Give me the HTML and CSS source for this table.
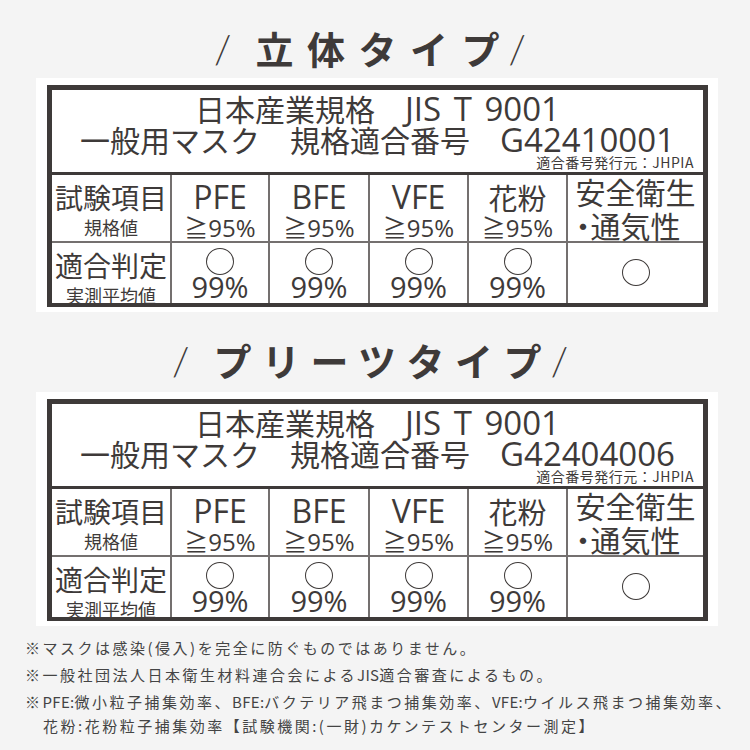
FILE: index.html
```html
<!DOCTYPE html>
<html lang="ja">
<head>
<meta charset="utf-8">
<title>マスク規格</title>
<link rel="stylesheet" href="styles.css">
</head>
<body>
<main class="page">
  <h2 class="title"><span class="slash slash--left">/</span><span class="title-text">立体タイプ</span><span class="slash slash--right">/</span></h2>
  <section class="panel">
    <div class="spec">
      <div class="spec-head">
        <p class="head-line">日本産業規格　<span class="latin">JIS T 9001</span></p>
        <p class="head-line">一般用マスク　規格適合番号　<span class="latin">G42410001</span></p>
        <p class="issuer">適合番号発行元：JHPIA</p>
      </div>
      <div class="spec-grid">
        <div class="cell label"><span class="label-main">試験項目</span><span class="label-sub">規格値</span></div>
        <div class="cell"><span class="item">PFE</span><span class="std">≧95%</span></div>
        <div class="cell"><span class="item">BFE</span><span class="std">≧95%</span></div>
        <div class="cell"><span class="item">VFE</span><span class="std">≧95%</span></div>
        <div class="cell"><span class="item item--jp">花粉</span><span class="std">≧95%</span></div>
        <div class="cell safety"><span class="safety-text">安全衛生<br>・通気性</span></div>
        <div class="cell label"><span class="label-main">適合判定</span><span class="label-sub">実測平均値</span></div>
        <div class="cell"><span class="ok"></span><span class="value">99%</span></div>
        <div class="cell"><span class="ok"></span><span class="value">99%</span></div>
        <div class="cell"><span class="ok"></span><span class="value">99%</span></div>
        <div class="cell"><span class="ok"></span><span class="value">99%</span></div>
        <div class="cell cell--center"><span class="ok"></span></div>
      </div>
    </div>
  </section>

  <h2 class="title title--second"><span class="slash slash--left">/</span><span class="title-text">プリーツタイプ</span><span class="slash slash--right">/</span></h2>
  <section class="panel">
    <div class="spec">
      <div class="spec-head">
        <p class="head-line">日本産業規格　<span class="latin">JIS T 9001</span></p>
        <p class="head-line">一般用マスク　規格適合番号　<span class="latin">G42404006</span></p>
        <p class="issuer">適合番号発行元：JHPIA</p>
      </div>
      <div class="spec-grid">
        <div class="cell label"><span class="label-main">試験項目</span><span class="label-sub">規格値</span></div>
        <div class="cell"><span class="item">PFE</span><span class="std">≧95%</span></div>
        <div class="cell"><span class="item">BFE</span><span class="std">≧95%</span></div>
        <div class="cell"><span class="item">VFE</span><span class="std">≧95%</span></div>
        <div class="cell"><span class="item item--jp">花粉</span><span class="std">≧95%</span></div>
        <div class="cell safety"><span class="safety-text">安全衛生<br>・通気性</span></div>
        <div class="cell label"><span class="label-main">適合判定</span><span class="label-sub">実測平均値</span></div>
        <div class="cell"><span class="ok"></span><span class="value">99%</span></div>
        <div class="cell"><span class="ok"></span><span class="value">99%</span></div>
        <div class="cell"><span class="ok"></span><span class="value">99%</span></div>
        <div class="cell"><span class="ok"></span><span class="value">99%</span></div>
        <div class="cell cell--center"><span class="ok"></span></div>
      </div>
    </div>
  </section>

  <div class="notes">
    <p>※マスクは感染(侵入)を完全に防ぐものではありません。</p>
    <p>※一般社団法人日本衛生材料連合会による<span class="lat">JIS</span>適合審査によるもの。</p>
    <p class="note-wrap">※<span class="lat">PFE:</span>微小粒子捕集効率、<span class="lat">BFE:</span>バクテリア飛まつ捕集効率、<span class="lat">VFE:</span>ウイルス飛まつ捕集効率、<br>花粉:花粉粒子捕集効率【試験機関:(一財)カケンテストセンター測定】</p>
  </div>
</main>
</body>
</html>
```

FILE: styles.css
```css
* { box-sizing: border-box; }

body {
  margin: 0;
  background: #f4f4f4;
  color: #3e3a39;
  font-family: "Open Sans", "Noto Sans CJK JP", sans-serif;
}

.page {
  width: 750px;
}

.title {
  margin: 0;
  padding: 18px 10px 0 0;
  height: 78px;
  line-height: 60px;
  text-align: center;
  font-family: "Noto Sans CJK JP", sans-serif;
  font-size: 38px;
  font-weight: 700;
  white-space: nowrap;
}

.title--second {
  height: 80px;
}

.title-text {
  letter-spacing: 13.5px;
  margin-right: -13.5px;
}

.title--second .title-text {
  letter-spacing: 10.5px;
  margin-right: -10.5px;
}

.slash {
  font-family: "Lato", sans-serif;
  font-weight: 300;
  font-size: 40px;
}

.slash--left { margin-right: 24px; }
.slash--right { margin-left: 9px; }

.panel {
  background: #fff;
  margin: 0 32px 0 36px;
  padding: 7px 10px 5px 11px;
}

.spec {
  border: 5px solid #3e3a39;
  border-bottom-width: 4px;
}

.spec-head {
  height: 85px;
  border-bottom: 3px solid #3e3a39;
  padding-top: 3px;
  font-family: "Noto Sans CJK JP", sans-serif;
  font-size: 30px;
  text-align: center;
}

.head-line {
  margin: 0;
  line-height: 31px;
  white-space: nowrap;
}

.latin {
  font-family: "Open Sans", sans-serif;
  font-size: 33px;
  word-spacing: 4px;
}

.issuer {
  margin: 0;
  padding-right: 9px;
  text-align: right;
  font-size: 14px;
  line-height: 15px;
  letter-spacing: 0.5px;
}

.spec-grid {
  display: grid;
  grid-template-columns: 118px 96px 98px 97px 97px 1fr;
  grid-template-rows: 66px 60px;
  gap: 2px;
  background: #74706f;
}

.cell {
  background: #fff;
  display: flex;
  flex-direction: column;
  align-items: center;
  padding-top: 6px;
  white-space: nowrap;
}

.label-main {
  font-family: "Noto Sans CJK JP", sans-serif;
  font-size: 28px;
  line-height: 32px;
}

.label-sub {
  font-family: "Noto Sans CJK JP", sans-serif;
  font-size: 18px;
  line-height: 28px;
}

.item {
  font-size: 32px;
  line-height: 32px;
}

.item--jp {
  font-family: "Noto Sans CJK JP", sans-serif;
  font-size: 29px;
}

.std {
  font-size: 24px;
  line-height: 30px;
}

.safety {
  padding-top: 0;
  justify-content: center;
}

.safety-text {
  font-family: "Noto Sans CJK JP", sans-serif;
  font-size: 30px;
  line-height: 34px;
  font-feature-settings: "palt";
  text-align: left;
}

.ok {
  display: block;
  width: 28px;
  height: 27px;
  border: 1.4px solid #3e3a39;
  border-radius: 50%;
  margin-top: -1px;
  flex: none;
}

.value {
  font-size: 29px;
  line-height: 24px;
}

.cell--center {
  padding-top: 0;
  justify-content: center;
}

.notes {
  padding: 10px 0 0 25px;
  font-family: "Noto Sans CJK JP", sans-serif;
  font-size: 15px;
  letter-spacing: 2.5px;
  line-height: 24px;
  color: #444;
  white-space: nowrap;
}

.notes p {
  margin: 0 0 3px;
}

.lat {
  letter-spacing: 0.3px;
}

.note-wrap {
  padding-left: 18px;
  text-indent: -18px;
}
```
